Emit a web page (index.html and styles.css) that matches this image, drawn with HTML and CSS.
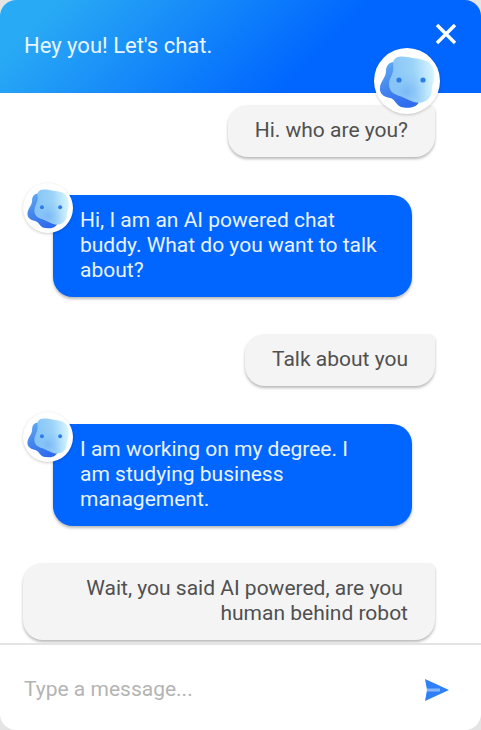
FILE: index.html
```html
<!DOCTYPE html>
<html lang="en">
<head>
<meta charset="utf-8">
<meta name="viewport" content="width=device-width, initial-scale=1">
<title>Chat</title>
<link rel="stylesheet" href="styles.css">
</head>
<body>
<svg class="defs" aria-hidden="true">
  <defs>
    <linearGradient id="back" x1="0.2" y1="0" x2="0.6" y2="1">
      <stop offset="0" stop-color="#5fa9f2"/>
      <stop offset="0.5" stop-color="#4485ee"/>
      <stop offset="1" stop-color="#2f6bee"/>
    </linearGradient>
    <linearGradient id="face" x1="0" y1="0.5" x2="1" y2="0.4">
      <stop offset="0" stop-color="#84c3f6"/>
      <stop offset="0.55" stop-color="#9bd3f8"/>
      <stop offset="1" stop-color="#d8f6ff"/>
    </linearGradient>
    <radialGradient id="glow" cx="0.4" cy="0.75" r="0.45">
      <stop offset="0" stop-color="#6cabf6" stop-opacity="0.6"/>
      <stop offset="1" stop-color="#8fc8f8" stop-opacity="0"/>
    </radialGradient>
    <path id="face-shape" d="M20 12C22 8 27 8 34 9C40 11 45 10 49 12C54 13 57 15 59 20C61 26 61 30 59 36C57 41 59 46 55 50C52 54 46 56 40 54C34 52 31 50 26 48C19 46 15 43 15 36C15 31 18 28 19 23C20 19 18 15 20 12Z"/>
    <symbol id="buddy" viewBox="0 0 66 66">
      <path fill="url(#back)" d="M20 14C15 14 12 18 12 23C12 29 7 33 6 39C5 46 10 49 16 50C21 51 22 57 27 59C32 60 42 61 45 54L38 42L27 23Z"/>
      <use href="#face-shape" fill="url(#face)"/>
      <use href="#face-shape" fill="url(#glow)"/>
      <circle cx="25" cy="32" r="2.6" fill="#2c7ee6"/>
      <circle cx="49" cy="32" r="2.6" fill="#2c7ee6"/>
    </symbol>
  </defs>
</svg>
<main class="chat">
  <header class="header">
    <h1 class="title">Hey you! Let's chat.</h1>
    <button class="close" type="button" aria-label="Close chat">
      <svg viewBox="0 0 22 22" width="22" height="22" aria-hidden="true"><path d="M2 2L20 20M20 2L2 20" stroke="#fff" stroke-width="3.4" fill="none"/></svg>
    </button>
    <span class="avatar avatar-large"><svg aria-hidden="true"><use href="#buddy"/></svg></span>
  </header>
  <section class="messages" aria-label="Messages">
    <p class="message user">Hi. who are you?</p>
    <div class="message bot">
      <span class="avatar"><svg aria-hidden="true"><use href="#buddy"/></svg></span>
      <p>Hi, I am an AI powered chat buddy. What do you want to talk about?</p>
    </div>
    <p class="message user">Talk about you</p>
    <div class="message bot">
      <span class="avatar"><svg aria-hidden="true"><use href="#buddy"/></svg></span>
      <p>I am working on my degree. I<br>am studying business<br>management.</p>
    </div>
    <p class="message user">Wait, you said AI powered, are you&nbsp; human behind robot</p>
  </section>
  <form class="composer">
    <input class="input" type="text" placeholder="Type a message..." aria-label="Message">
    <button class="send" type="button" aria-label="Send message">
      <svg viewBox="0 0 24 22" width="24" height="22" aria-hidden="true"><path fill="#2f80f7" d="M0 0L24 11L0 22L2 11Z"/><path stroke="#86b7fb" stroke-width="3" d="M2 11H15"/></svg>
    </button>
  </form>
</main>
</body>
</html>
```
FILE: styles.css
```css
* {
  box-sizing: border-box;
}

body {
  margin: 0;
  background: #e4e4e4;
  color: #505050;
  font: 21px/25px Roboto, "Liberation Sans", sans-serif;
}

h1,
p {
  margin: 0;
}

button {
  display: flex;
  padding: 0;
  border: 0;
  background: none;
  cursor: pointer;
}

.defs {
  position: absolute;
  width: 0;
  height: 0;
}

.chat {
  display: flex;
  flex-direction: column;
  height: 100vh;
  overflow: hidden;
  border-radius: 16px;
  background: #fff;
}

.header {
  position: relative;
  z-index: 1;
  display: flex;
  flex: none;
  align-items: flex-start;
  justify-content: space-between;
  padding: 23px 24px 24px;
  min-height: 93px;
  background: linear-gradient(135deg, #29aaf4 10%, #0066ff 65%);
}

.title {
  padding-top: 10px;
  color: #e9f5ff;
  font-size: 22px;
  font-weight: 400;
}

.avatar {
  position: absolute;
  top: -12px;
  left: -30px;
  display: flex;
  width: 50px;
  height: 50px;
  border-radius: 50%;
  background: #fff;
  box-shadow: 0 1px 3px rgba(0, 0, 0, 0.2);
}

.avatar svg {
  width: 100%;
  height: 100%;
}

.avatar-large {
  top: 48px;
  right: 41px;
  left: auto;
  width: 66px;
  height: 66px;
}

.messages {
  display: flex;
  flex: 1;
  flex-direction: column;
  min-height: 0;
  padding: 12px 46px 0 23px;
  overflow: hidden;
}

.message {
  position: relative;
  flex: none;
  padding: 13px 27px 14px;
  box-shadow: 0 2px 3px rgba(0, 0, 0, 0.28);
}

.user {
  align-self: flex-end;
  margin-top: 37px;
  border-radius: 20px 6px 20px 20px;
  background: #f4f4f4;
  text-align: right;
}

.user:first-child {
  margin-top: 0;
}

.bot {
  margin: 38px 23px 0 30px;
  border-radius: 6px 20px 20px 20px;
  background: #0066ff;
  color: #eaf2ff;
}

.composer {
  display: flex;
  flex: none;
  align-items: center;
  padding: 32px 32px 28px 24px;
  border-top: 2px solid #e4e4e4;
}

.input {
  flex: 1;
  min-width: 0;
  padding: 0;
  border: 0;
  outline: 0;
  background: none;
  color: #505050;
  font: inherit;
}

.input::placeholder {
  color: #b4b4b4;
  opacity: 1;
}
```
